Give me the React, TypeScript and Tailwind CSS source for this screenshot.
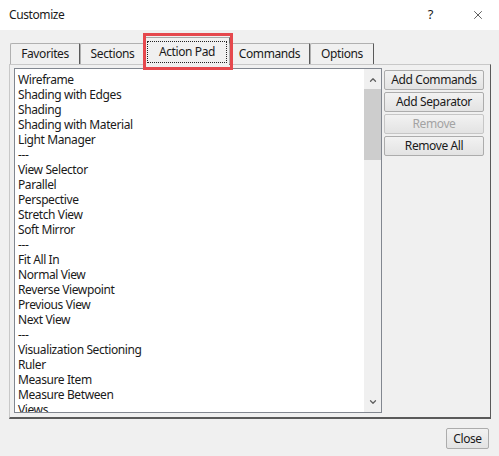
import { X, ChevronUp, ChevronDown } from 'lucide-react'

const items = [
  'Wireframe',
  'Shading with Edges',
  'Shading',
  'Shading with Material',
  'Light Manager',
  '---',
  'View Selector',
  'Parallel',
  'Perspective',
  'Stretch View',
  'Soft Mirror',
  '---',
  'Fit All In',
  'Normal View',
  'Reverse Viewpoint',
  'Previous View',
  'Next View',
  '---',
  'Visualization Sectioning',
  'Ruler',
  'Measure Item',
  'Measure Between',
  'Views',
]

const tabs = [
  { label: 'Favorites', w: 'w-[70px]' },
  { label: 'Sections', w: 'w-[65px]' },
  { label: 'Action Pad', w: 'w-[86px]', active: true },
  { label: 'Commands', w: 'w-[81px]' },
  { label: 'Options', w: 'w-[64px]' },
]

function DlgButton({ label, disabled }: { label: string; disabled?: boolean }) {
  return (
    <button
      className={`h-[20px] w-[100px] rounded-[2px] border text-[12px] leading-none bg-gradient-to-b from-[#f2f2f2] to-[#e3e3e3] ${
        disabled ? 'border-[#c6c6c6] text-[#a3a3a3]' : 'border-[#acacac] text-[#1a1a1a]'
      }`}
    >
      {label}
    </button>
  )
}

export default function App() {
  return (
    <div
      className="w-[499px] h-[456px] flex flex-col bg-[#f0f0f0] text-[#1a1a1a] relative overflow-hidden tracking-[-0.4px]"
      style={{ fontFamily: '"Segoe UI", "Noto Sans", sans-serif' }}
    >
      {/* Title bar */}
      <div className="h-[30px] bg-white flex items-center pl-[9px]">
        <span className="text-[12px]">Customize</span>
        <span className="ml-auto text-[13px] mr-[38px]">?</span>
        <X className="w-[14px] h-[14px] mr-[14px]" strokeWidth={1.2} />
      </div>

      <div className="flex-1 flex flex-col px-[9px]">
        {/* Tabs */}
        <div className="flex items-end h-[34px] pl-[1px] relative z-10">
          {tabs.map((t) =>
            t.active ? (
              <div
                key={t.label}
                className={`${t.w} -mx-[1px] h-[28px] -mb-[1px] bg-[#f0f0f0] border border-b-0 border-[#a9a9a9] border-r-[#6d6d6d] flex items-start justify-center pt-[3px]`}
              >
                <span className="w-[80px] h-[22px] flex items-center justify-center text-[12px] border border-dotted border-[#222]">
                  {t.label}
                </span>
              </div>
            ) : (
              <div
                key={t.label}
                className={`${t.w} h-[21px] bg-[#f0f0f0] border border-b-0 border-[#b0b0b0] border-r-[#5a5a5a] rounded-tl-[2px] flex items-center justify-center`}
              >
                <span className="text-[12px]">{t.label}</span>
              </div>
            )
          )}
        </div>

        {/* Panel */}
        <div className="h-[355px] w-[482px] border border-[#c8c8c8] border-r-[#5a5a5a] border-b-[#5a5a5a] border-b-2 flex pl-[4px] pt-[3px] gap-[2px]">
          <div className="w-[368px] h-[345px] border border-[#828790] bg-white flex">
            <div className="flex-1 overflow-hidden pl-[3px] pt-[3px]">
              {items.map((it, i) => (
                <div key={i} className="text-[12px] leading-[15px] whitespace-nowrap">
                  {it}
                </div>
              ))}
            </div>
            <div className="w-[17px] bg-[#f0f0f0] flex flex-col items-center">
              <ChevronUp className="w-[10px] h-[10px] mt-[6px] text-[#606060]" strokeWidth={3} />
              <div className="w-[17px] h-[71px] bg-[#cdcdcd] mt-[4px]" />
              <div className="flex-1" />
              <ChevronDown className="w-[10px] h-[10px] mb-[5px] text-[#606060]" strokeWidth={3} />
            </div>
          </div>
          <div className="flex flex-col gap-[2px] pt-[2px]">
            <DlgButton label="Add Commands" />
            <DlgButton label="Add Separator" />
            <DlgButton label="Remove" disabled />
            <DlgButton label="Remove All" />
          </div>
        </div>

        <div className="flex justify-end pt-[9px] pr-[1px]">
          <button className="h-[21px] w-[43px] rounded-[2px] border border-[#acacac] bg-gradient-to-b from-[#f2f2f2] to-[#e3e3e3] text-[12px]">
            Close
          </button>
        </div>
      </div>

      {/* Highlight overlay */}
      <div className="absolute left-[143px] top-[33px] w-[90px] h-[37px] border-[3px] border-[#e5484d] pointer-events-none z-20" />
    </div>
  )
}
